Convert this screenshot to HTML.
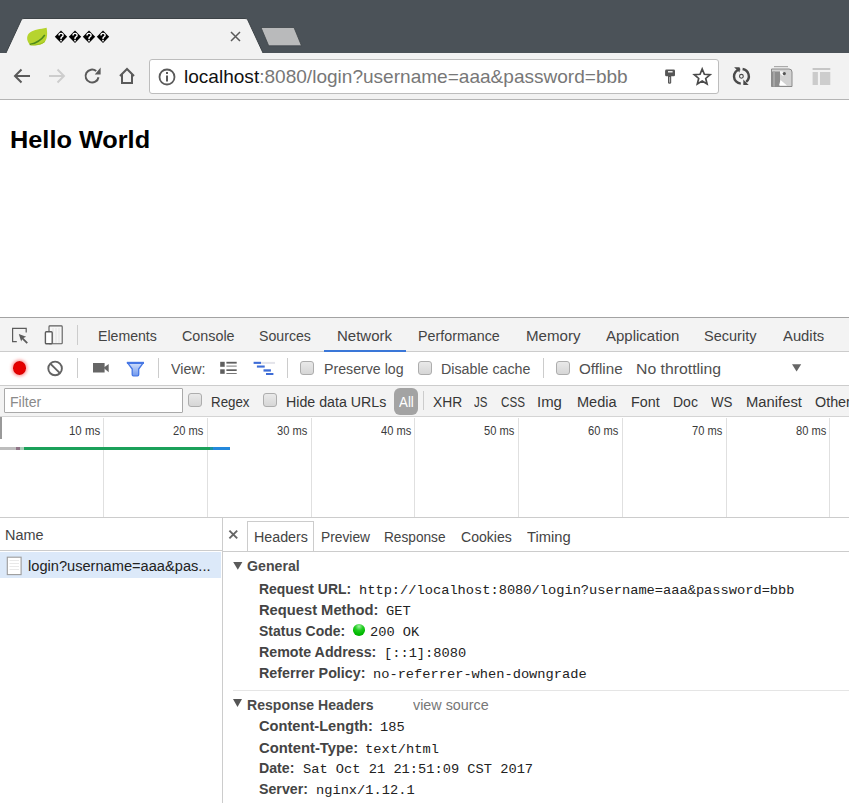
<!DOCTYPE html>
<html><head><meta charset="utf-8">
<style>
*{margin:0;padding:0;box-sizing:border-box}
html,body{width:849px;height:803px;overflow:hidden;background:#fff;font-family:"Liberation Sans",sans-serif;position:relative}
.a{position:absolute}
#strip{left:0;top:0;width:849px;height:54px;background:#4b5258}
#toolbar{left:0;top:53px;width:849px;height:46px;background:#f2f2f2}
#tbline{left:0;top:99px;width:849px;height:1px;background:#b4b4b4}
#omni{left:149px;top:59px;width:570px;height:35px;background:#fff;border:1px solid #bdbdbd;border-radius:3px}
.url{left:183px;top:65px;font-size:19px;color:#7a7a7a;white-space:nowrap}
.url b{font-weight:normal;color:#222}
h1{position:absolute;left:9px;top:124px;font-size:25px;font-weight:bold;color:#111}
#dt{left:0;top:317px;width:849px;height:486px;background:#fff}
.dtline{height:1px;background:#ccc;left:0;width:849px}
.bar{background:#f3f3f3;left:0;width:849px}
.tab{font-size:14.5px;color:#333;white-space:nowrap}
.sep{width:1px;background:#ccc}
.t13{font-size:14px;color:#333;white-space:nowrap}
.cb{width:14px;height:14px;border:1px solid #adadad;border-radius:3px;background:linear-gradient(#e9e9e9,#d6d6d6)}
.ms{font-size:12px;color:#333;text-align:right;white-space:nowrap}
.grid{width:1px;background:#e0e0e0;top:418px;height:99px}
.hk{font-size:14.5px;font-weight:bold;color:#333;white-space:nowrap}
.hv{font-family:"Liberation Mono",monospace;font-size:13.75px;color:#222;white-space:nowrap}
</style></head><body>
<div class="a" id="strip"></div>
<!-- active tab -->
<svg class="a" style="left:0;top:0" width="849" height="54">
 <path d="M5.5 54 L21.5 19.5 Q22.5 18.5 24 18.5 L245 18.5 Q246.5 18.5 247.5 19.5 L263.5 54 Z" fill="#f2f2f2" stroke="#3c4246" stroke-width="1"/>
 <path d="M261 27.5 L294 27.5 L301.5 45.8 L268.7 45.8 Z" fill="#b9babb" stroke="#3e4448" stroke-width="0.8"/>
</svg>
<div class="a" id="toolbar"></div>
<div class="a" id="tbline"></div>
<!-- favicon -->
<svg class="a" style="left:26px;top:26px" width="22" height="22" viewBox="0 0 22 22"><path d="M3.7 18.6C0 14 0.5 9 4 6.5C8 3.5 14 3 20.6 1.7C21.5 7 21.5 12 19 15.5C16 19.5 9 20 3.7 18.6Z" fill="#b6d42e"/><path d="M3.7 18.6C9 17.5 15 14.5 18.8 9" stroke="#4e8a1c" stroke-width="1.5" fill="none"/><path d="M4.5 19C10 19.5 16 18 19 15.5" stroke="#9cc21e" stroke-width="1" fill="none"/></svg>
<svg class="a" style="left:0;top:0" width="120" height="50"><path d="M61 30.5L67.2 36.7L61 42.9L54.8 36.7Z" fill="#000"/><path d="M59 35.4Q59 33.4 61 33.4Q63.1 33.4 63.1 35.3Q63.1 36.5 61.6 37.2Q61 37.6 61 38.9" stroke="#fff" stroke-width="1.4" fill="none"/><rect x="60.2" y="39.8" width="1.6" height="1.6" fill="#fff"/><path d="M75 30.5L81.2 36.7L75 42.9L68.8 36.7Z" fill="#000"/><path d="M73 35.4Q73 33.4 75 33.4Q77.1 33.4 77.1 35.3Q77.1 36.5 75.6 37.2Q75 37.6 75 38.9" stroke="#fff" stroke-width="1.4" fill="none"/><rect x="74.2" y="39.8" width="1.6" height="1.6" fill="#fff"/><path d="M89 30.5L95.2 36.7L89 42.9L82.8 36.7Z" fill="#000"/><path d="M87 35.4Q87 33.4 89 33.4Q91.1 33.4 91.1 35.3Q91.1 36.5 89.6 37.2Q89 37.6 89 38.9" stroke="#fff" stroke-width="1.4" fill="none"/><rect x="88.2" y="39.8" width="1.6" height="1.6" fill="#fff"/><path d="M103 30.5L109.2 36.7L103 42.9L96.8 36.7Z" fill="#000"/><path d="M101 35.4Q101 33.4 103 33.4Q105.1 33.4 105.1 35.3Q105.1 36.5 103.6 37.2Q103 37.6 103 38.9" stroke="#fff" stroke-width="1.4" fill="none"/><rect x="102.2" y="39.8" width="1.6" height="1.6" fill="#fff"/></svg>
<!-- close x -->
<svg class="a" style="left:229.5px;top:31px" width="11" height="11"><path d="M1 1L10 10M10 1L1 10" stroke="#5a5a5a" stroke-width="1.5"/></svg>
<!-- nav icons -->
<svg class="a" style="left:12px;top:66px" width="20" height="20" viewBox="0 0 20 20"><path d="M18 10H3M9.5 3.5L3 10l6.5 6.5" stroke="#5a5a5a" stroke-width="2" fill="none"/></svg>
<svg class="a" style="left:47px;top:66px" width="20" height="20" viewBox="0 0 20 20"><path d="M2 10H17M10.5 3.5L17 10l-6.5 6.5" stroke="#cdcdcd" stroke-width="1.9" fill="none"/></svg>
<svg class="a" style="left:82px;top:66px" width="20" height="20" viewBox="0 0 20 20"><path d="M14.2 5.0A6.5 6.5 0 1 0 16.5 11.2" stroke="#5a5a5a" stroke-width="2" fill="none"/><path d="M18.6 1.6V8.4H12.8Z" fill="#5a5a5a"/></svg>
<svg class="a" style="left:117px;top:66px" width="20" height="20" viewBox="0 0 20 20"><path d="M3 10L10 3L17 10M5 8.5V17H15V8.5" stroke="#5a5a5a" stroke-width="2" fill="none"/></svg>
<div class="a" id="omni"></div>
<svg class="a" style="left:157px;top:67px" width="20" height="20" viewBox="0 0 20 20"><circle cx="10" cy="10" r="7.5" stroke="#5a5a5a" stroke-width="1.8" fill="none"/><rect x="9" y="8.5" width="2" height="6" fill="#5a5a5a"/><rect x="9" y="5" width="2" height="2" fill="#5a5a5a"/></svg>
<!-- key icon -->
<svg class="a" style="left:661px;top:66px" width="18" height="20" viewBox="0 0 18 20"><rect x="4.1" y="3.6" width="9.9" height="6.6" rx="1.3" fill="#555"/><rect x="7" y="5" width="4.6" height="1.5" fill="#e8e8e8"/><path d="M7 10H10.2V16.8Q10.2 17.8 8.6 17.8Q7 17.8 7 16.8Z" fill="#555"/><rect x="8.1" y="11" width="1" height="5.5" fill="#bbb"/></svg>
<svg class="a" style="left:692px;top:66px" width="21" height="21" viewBox="0 0 21 21"><path d="M10.20 3.00L12.37 8.31L18.09 8.74L13.72 12.44L15.08 18.01L10.20 15.00L5.32 18.01L6.68 12.44L2.31 8.74L8.03 8.31Z" stroke="#4a4a4a" stroke-width="1.7" fill="none" stroke-linejoin="miter"/></svg>
<!-- extension icons -->
<svg class="a" style="left:728px;top:62px" width="28" height="28" viewBox="0 0 28 28"><path d="M12.2 7.1A7.3 7.3 0 0 0 12.8 21.6" stroke="#4a4a4a" stroke-width="2.4" fill="none"/><path d="M14.6 7.0A7.3 7.3 0 0 1 18.2 19.8" stroke="#4a4a4a" stroke-width="2.4" fill="none"/><path d="M6.1 5.2H11.6V10.6Z" fill="#4a4a4a"/><path d="M15.3 17.4V23H20.7Z" fill="#4a4a4a"/><circle cx="13.4" cy="14.3" r="1.9" stroke="#4a4a4a" stroke-width="1.1" fill="none"/></svg>
<svg class="a" style="left:766px;top:60px" width="32" height="32" viewBox="0 0 32 32"><rect x="8" y="6" width="14" height="1.2" fill="#aaa"/><path d="M5.5 9H23Q26 9 26 12V26.5H5.5Z" fill="#d2d2d2" stroke="#8a8a8a" stroke-width="1"/><rect x="5.5" y="11.5" width="8.5" height="15" fill="#8d8d8d"/><rect x="7" y="11.5" width="2" height="15" fill="#a5a5a5"/><path d="M14 11Q17 11 19 13Q18 16 17 16Q15 15 14 13Z" fill="#f6f6f6"/><circle cx="18.3" cy="13.6" r="1.6" fill="#555"/><path d="M13 25.5L14.5 20L21 25.5Z" fill="#fff"/></svg>
<svg class="a" style="left:806px;top:62px" width="32" height="28" viewBox="0 0 32 28"><rect x="6.4" y="6" width="18.1" height="1.9" rx="0.9" fill="#c6c6c6"/><rect x="6.6" y="10" width="5.3" height="13" fill="#cbcbcb"/><rect x="14" y="10" width="10.3" height="13" fill="#cdcdcd"/></svg>


<!-- DevTools -->
<div class="a" id="dt"></div>
<div class="a dtline" style="top:317px;background:#a3a3a3"></div>
<div class="a bar" style="top:318px;height:33px"></div>
<div class="a dtline" style="top:351px"></div>
<div class="a" style="left:0;width:849px;top:352px;height:33px;background:#fff"></div>
<div class="a dtline" style="top:385px"></div>
<div class="a bar" style="top:386px;height:30px"></div>
<div class="a dtline" style="top:416px;background:#d4d4d4"></div>

<!-- devtools tab bar -->
<svg class="a" style="left:10px;top:325px" width="20" height="20" viewBox="0 0 20 20"><path d="M6.8 16.6H2.6V3.4H16.2V7.4" stroke="#5c5c5c" stroke-width="1.2" fill="none"/><path d="M8.8 9L16.2 11.8L13.4 13L17.9 17.5L16.6 18.8L12.1 14.3L11.2 16.6Z" fill="#5c5c5c"/></svg>
<svg class="a" style="left:43px;top:324px" width="22" height="22" viewBox="0 0 22 22"><rect x="6" y="1.9" width="13.2" height="17.9" rx="0.8" stroke="#5c5c5c" stroke-width="1.1" fill="#f6f6f6"/><path d="M10 4V19M13 4V19M16 4V19" stroke="#e2e2e2" stroke-width="1"/><rect x="2.4" y="7.7" width="6.8" height="12.1" rx="1" stroke="#5c5c5c" stroke-width="1.4" fill="#fff"/></svg>
<div class="a sep" style="left:77px;top:325px;height:20px"></div>
<div class="a" style="left:324px;top:350px;width:82px;height:2px;background:#3a77d8"></div>

<!-- network toolbar -->
<div class="a" style="left:12.5px;top:361px;width:13.5px;height:13.5px;border-radius:50%;background:radial-gradient(circle,#e60000 50%,#c00000 100%);box-shadow:0 0 3px 1.5px rgba(255,60,60,.45)"></div>
<svg class="a" style="left:46px;top:359px" width="18" height="18" viewBox="0 0 18 18"><circle cx="9.1" cy="9.4" r="6.8" stroke="#636363" stroke-width="1.9" fill="none"/><path d="M4.3 4.6L13.9 14.2" stroke="#636363" stroke-width="1.9"/></svg>
<div class="a sep" style="left:77px;top:358px;height:20px"></div>
<svg class="a" style="left:92px;top:362px" width="18" height="12" viewBox="0 0 18 12"><rect x="1" y="1" width="11.6" height="9.5" fill="#666"/><path d="M11.5 5.7L16.7 2V10.2Z" fill="#666"/></svg>
<svg class="a" style="left:126px;top:361px" width="19" height="16" viewBox="0 0 19 16"><defs><linearGradient id="fg" x1="0" y1="0" x2="0" y2="1"><stop offset="0" stop-color="#d6e3fb"/><stop offset="1" stop-color="#6f98ee"/></linearGradient></defs><path d="M1.4 1.6H17.4L12.7 8V13.6Q12.7 14.8 11.5 14.8H7.4Q6.2 14.8 6.2 13.6V8Z" stroke="#4677e4" stroke-width="1.3" fill="url(#fg)" stroke-linejoin="round"/><rect x="0.9" y="0.8" width="17" height="2.2" fill="#4677e4"/></svg>
<div class="a sep" style="left:158px;top:358px;height:20px"></div>
<svg class="a" style="left:214px;top:354px" width="30" height="26" viewBox="0 0 30 26"><rect x="6.2" y="7.8" width="4.5" height="5" fill="#5e5e5e"/><rect x="12.4" y="7.8" width="10.3" height="1.8" fill="#5e5e5e"/><rect x="12.4" y="11.6" width="10.3" height="1" fill="#777"/><rect x="6.2" y="15.3" width="4.5" height="4.5" fill="#5e5e5e"/><rect x="12.4" y="15.3" width="10.3" height="1.7" fill="#5e5e5e"/><rect x="12.4" y="19" width="10.3" height="1" fill="#777"/></svg>
<svg class="a" style="left:250px;top:358px" width="28" height="20" viewBox="0 0 28 20"><rect x="11" y="3.9" width="14" height="2" fill="#e4e4ea"/><rect x="3.6" y="3.8" width="7.4" height="2.1" fill="#3d6cd6"/><rect x="6.9" y="7.5" width="7.8" height="2.1" fill="#3d6cd6"/><rect x="13.5" y="11.3" width="7.4" height="2.3" fill="#3d6cd6"/><rect x="16" y="15" width="7.4" height="2" fill="#3d6cd6"/></svg>
<div class="a sep" style="left:287px;top:358px;height:20px"></div>
<div class="a cb" style="left:300px;top:361px"></div>
<div class="a cb" style="left:418px;top:361px"></div>
<div class="a sep" style="left:543px;top:358px;height:20px"></div>
<div class="a cb" style="left:556px;top:361px"></div>
<svg class="a" style="left:792px;top:364px" width="10" height="8"><path d="M0 0.2H9.2L4.6 7.6Z" fill="#666"/></svg>

<!-- filter bar -->
<div class="a" style="left:4px;top:388px;width:179px;height:25px;border:1px solid #a9a9a9;background:#fff;border-radius:1px"></div>
<div class="a cb" style="left:188px;top:393px"></div>
<div class="a cb" style="left:263px;top:393px"></div>
<div class="a" style="left:394px;top:388px;width:24px;height:27px;border-radius:6px;background:#a3a3a3"></div>
<div class="a sep" style="left:423px;top:391px;height:19px"></div>

<!-- overview -->
<div class="a grid" style="left:103px"></div>
<div class="a grid" style="left:207px"></div>
<div class="a grid" style="left:311px"></div>
<div class="a grid" style="left:414px"></div>
<div class="a grid" style="left:518px"></div>
<div class="a grid" style="left:622px"></div>
<div class="a grid" style="left:726px"></div>
<div class="a grid" style="left:829px"></div>
<div class="a" style="left:0;top:417px;width:2px;height:22px;background:#999"></div>
<div class="a" style="left:0;top:447px;width:16px;height:3px;background:#bdbdbd"></div>
<div class="a" style="left:16px;top:447px;width:4px;height:3px;background:#8f7486"></div>
<div class="a" style="left:20px;top:447px;width:4px;height:3px;background:#a9ccb8"></div>
<div class="a" style="left:24px;top:447px;width:186px;height:3px;background:#1ba15a"></div>
<div class="a" style="left:210px;top:447px;width:3px;height:3px;background:#1a94a0"></div>
<div class="a" style="left:213px;top:447px;width:16.5px;height:3px;background:#2388dc"></div>
<div class="a dtline" style="top:517px"></div>

<!-- request list -->
<div class="a" style="left:222px;top:518px;width:1px;height:285px;background:#ccc"></div>
<div class="a" style="left:0;top:550px;width:222px;height:1px;background:#ccc"></div>
<div class="a" style="left:0;top:552px;width:221px;height:26px;background:#dce9f9"></div>
<svg class="a" style="left:6px;top:556px" width="17" height="21" viewBox="0 0 17 21"><rect x="1.3" y="1.2" width="13.8" height="17.4" fill="#fff" stroke="#9c9c9c" stroke-width="1.1"/><path d="M3.5 4.5H13M3.5 7.5H13M3.5 10.5H13M3.5 13.5H13" stroke="#e6e6e6" stroke-width="0.9"/></svg>

<!-- details -->
<svg class="a" style="left:228px;top:529px" width="11" height="11"><path d="M1.4 1.6L9.2 9.4M9.2 1.6L1.4 9.4" stroke="#666" stroke-width="1.9"/></svg>
<div class="a" style="left:223px;top:551px;width:626px;height:1px;background:#ccc"></div>
<div class="a" style="left:247px;top:521px;width:67px;height:30px;border:1px solid #ccc;border-bottom:none;background:#fff"></div>

<svg class="a" style="left:233px;top:561px" width="10" height="10"><path d="M0.2 1H9.4L4.8 8.8Z" fill="#5a5a5a"/></svg>
<div class="a" style="left:353px;top:624px;width:12px;height:11.5px;border-radius:50%;background:radial-gradient(circle at 50% 20%,#9ff09f 0,#22cc22 35%,#00b800 70%,#009a00 100%)"></div>
<div class="a" style="left:233px;top:690px;width:616px;height:1px;background:#e5e5e5"></div>
<svg class="a" style="left:233px;top:698px" width="10" height="10"><path d="M0 1H9L4.5 9Z" fill="#555"/></svg>
<div class="a" style="left:183.90px;top:66.85px;font-family:'Liberation Sans',sans-serif;font-size:19px;font-weight:normal;line-height:1;white-space:nowrap;color:#777;transform:scaleX(1.0025);transform-origin:0 0"><span style="color:#111">localhost</span>:8080/login?username=aaa&amp;password=bbb</div>
<div class="a" style="left:9.67px;top:127.80px;font-family:'Liberation Sans',sans-serif;font-size:24.5px;font-weight:bold;line-height:1;white-space:nowrap;color:#000;transform:scaleX(1.0328);transform-origin:0 0">Hello World</div>
<div class="a" style="left:98.30px;top:327.90px;font-family:'Liberation Sans',sans-serif;font-size:15.5px;font-weight:normal;line-height:1;white-space:nowrap;color:#444;transform:scaleX(0.9109);transform-origin:0 0">Elements</div>
<div class="a" style="left:182.40px;top:327.90px;font-family:'Liberation Sans',sans-serif;font-size:15.5px;font-weight:normal;line-height:1;white-space:nowrap;color:#444;transform:scaleX(0.9246);transform-origin:0 0">Console</div>
<div class="a" style="left:259.19px;top:327.90px;font-family:'Liberation Sans',sans-serif;font-size:15.5px;font-weight:normal;line-height:1;white-space:nowrap;color:#444;transform:scaleX(0.9125);transform-origin:0 0">Sources</div>
<div class="a" style="left:336.60px;top:327.90px;font-family:'Liberation Sans',sans-serif;font-size:15.5px;font-weight:normal;line-height:1;white-space:nowrap;color:#444;transform:scaleX(0.9667);transform-origin:0 0">Network</div>
<div class="a" style="left:418.10px;top:327.90px;font-family:'Liberation Sans',sans-serif;font-size:15.5px;font-weight:normal;line-height:1;white-space:nowrap;color:#444;transform:scaleX(0.9216);transform-origin:0 0">Performance</div>
<div class="a" style="left:525.50px;top:327.90px;font-family:'Liberation Sans',sans-serif;font-size:15.5px;font-weight:normal;line-height:1;white-space:nowrap;color:#444;transform:scaleX(0.9732);transform-origin:0 0">Memory</div>
<div class="a" style="left:605.60px;top:327.90px;font-family:'Liberation Sans',sans-serif;font-size:15.5px;font-weight:normal;line-height:1;white-space:nowrap;color:#444;transform:scaleX(0.9671);transform-origin:0 0">Application</div>
<div class="a" style="left:704.16px;top:327.90px;font-family:'Liberation Sans',sans-serif;font-size:15.5px;font-weight:normal;line-height:1;white-space:nowrap;color:#444;transform:scaleX(0.9364);transform-origin:0 0">Security</div>
<div class="a" style="left:783.00px;top:327.90px;font-family:'Liberation Sans',sans-serif;font-size:15.5px;font-weight:normal;line-height:1;white-space:nowrap;color:#444;transform:scaleX(0.9558);transform-origin:0 0">Audits</div>
<div class="a" style="left:171.00px;top:360.70px;font-family:'Liberation Sans',sans-serif;font-size:15.5px;font-weight:normal;line-height:1;white-space:nowrap;color:#505050;transform:scaleX(0.9189);transform-origin:0 0">View:</div>
<div class="a" style="left:323.50px;top:360.70px;font-family:'Liberation Sans',sans-serif;font-size:15.5px;font-weight:normal;line-height:1;white-space:nowrap;color:#505050;transform:scaleX(0.9149);transform-origin:0 0">Preserve log</div>
<div class="a" style="left:441.00px;top:360.70px;font-family:'Liberation Sans',sans-serif;font-size:15.5px;font-weight:normal;line-height:1;white-space:nowrap;color:#505050;transform:scaleX(0.9186);transform-origin:0 0">Disable cache</div>
<div class="a" style="left:578.60px;top:360.70px;font-family:'Liberation Sans',sans-serif;font-size:15.5px;font-weight:normal;line-height:1;white-space:nowrap;color:#505050;transform:scaleX(0.9795);transform-origin:0 0">Offline</div>
<div class="a" style="left:635.50px;top:360.70px;font-family:'Liberation Sans',sans-serif;font-size:15.5px;font-weight:normal;line-height:1;white-space:nowrap;color:#505050;transform:scaleX(1.0181);transform-origin:0 0">No throttling</div>
<div class="a" style="left:9.60px;top:394.00px;font-family:'Liberation Sans',sans-serif;font-size:15.5px;font-weight:normal;line-height:1;white-space:nowrap;color:#8a8a8a;transform:scaleX(0.9086);transform-origin:0 0">Filter</div>
<div class="a" style="left:211.00px;top:394.00px;font-family:'Liberation Sans',sans-serif;font-size:15.5px;font-weight:normal;line-height:1;white-space:nowrap;color:#363636;transform:scaleX(0.8600);transform-origin:0 0">Regex</div>
<div class="a" style="left:286.10px;top:394.00px;font-family:'Liberation Sans',sans-serif;font-size:15.5px;font-weight:normal;line-height:1;white-space:nowrap;color:#363636;transform:scaleX(0.9174);transform-origin:0 0">Hide data URLs</div>
<div class="a" style="left:433.10px;top:394.00px;font-family:'Liberation Sans',sans-serif;font-size:15.5px;font-weight:normal;line-height:1;white-space:nowrap;color:#363636;transform:scaleX(0.8906);transform-origin:0 0">XHR</div>
<div class="a" style="left:473.80px;top:394.00px;font-family:'Liberation Sans',sans-serif;font-size:15.5px;font-weight:normal;line-height:1;white-space:nowrap;color:#363636;transform:scaleX(0.7444);transform-origin:0 0">JS</div>
<div class="a" style="left:501.00px;top:394.00px;font-family:'Liberation Sans',sans-serif;font-size:15.5px;font-weight:normal;line-height:1;white-space:nowrap;color:#363636;transform:scaleX(0.7500);transform-origin:0 0">CSS</div>
<div class="a" style="left:537.44px;top:394.00px;font-family:'Liberation Sans',sans-serif;font-size:15.5px;font-weight:normal;line-height:1;white-space:nowrap;color:#363636;transform:scaleX(0.9640);transform-origin:0 0">Img</div>
<div class="a" style="left:577.10px;top:394.00px;font-family:'Liberation Sans',sans-serif;font-size:15.5px;font-weight:normal;line-height:1;white-space:nowrap;color:#363636;transform:scaleX(0.9381);transform-origin:0 0">Media</div>
<div class="a" style="left:630.60px;top:394.00px;font-family:'Liberation Sans',sans-serif;font-size:15.5px;font-weight:normal;line-height:1;white-space:nowrap;color:#363636;transform:scaleX(0.9226);transform-origin:0 0">Font</div>
<div class="a" style="left:673.20px;top:394.00px;font-family:'Liberation Sans',sans-serif;font-size:15.5px;font-weight:normal;line-height:1;white-space:nowrap;color:#363636;transform:scaleX(0.9036);transform-origin:0 0">Doc</div>
<div class="a" style="left:711.10px;top:394.00px;font-family:'Liberation Sans',sans-serif;font-size:15.5px;font-weight:normal;line-height:1;white-space:nowrap;color:#363636;transform:scaleX(0.8600);transform-origin:0 0">WS</div>
<div class="a" style="left:745.90px;top:394.00px;font-family:'Liberation Sans',sans-serif;font-size:15.5px;font-weight:normal;line-height:1;white-space:nowrap;color:#363636;transform:scaleX(0.9542);transform-origin:0 0">Manifest</div>
<div class="a" style="left:815.00px;top:394.00px;font-family:'Liberation Sans',sans-serif;font-size:15.5px;font-weight:normal;line-height:1;white-space:nowrap;color:#363636;transform:scaleX(0.9248);transform-origin:0 0">Other</div>
<div class="a" style="left:399.10px;top:394.00px;font-family:'Liberation Sans',sans-serif;font-size:15.5px;font-weight:normal;line-height:1;white-space:nowrap;color:#fff;transform:scaleX(0.8588);transform-origin:0 0">All</div>
<div class="a" style="left:68.62px;top:424.00px;font-family:'Liberation Sans',sans-serif;font-size:13px;font-weight:normal;line-height:1;white-space:nowrap;color:#3a3a3a;transform:scaleX(0.8800);transform-origin:0 0">10 ms</div>
<div class="a" style="left:173.22px;top:424.00px;font-family:'Liberation Sans',sans-serif;font-size:13px;font-weight:normal;line-height:1;white-space:nowrap;color:#3a3a3a;transform:scaleX(0.8556);transform-origin:0 0">20 ms</div>
<div class="a" style="left:276.94px;top:424.00px;font-family:'Liberation Sans',sans-serif;font-size:13px;font-weight:normal;line-height:1;white-space:nowrap;color:#3a3a3a;transform:scaleX(0.8556);transform-origin:0 0">30 ms</div>
<div class="a" style="left:380.66px;top:424.00px;font-family:'Liberation Sans',sans-serif;font-size:13px;font-weight:normal;line-height:1;white-space:nowrap;color:#3a3a3a;transform:scaleX(0.8556);transform-origin:0 0">40 ms</div>
<div class="a" style="left:484.38px;top:424.00px;font-family:'Liberation Sans',sans-serif;font-size:13px;font-weight:normal;line-height:1;white-space:nowrap;color:#3a3a3a;transform:scaleX(0.8556);transform-origin:0 0">50 ms</div>
<div class="a" style="left:588.10px;top:424.00px;font-family:'Liberation Sans',sans-serif;font-size:13px;font-weight:normal;line-height:1;white-space:nowrap;color:#3a3a3a;transform:scaleX(0.8556);transform-origin:0 0">60 ms</div>
<div class="a" style="left:691.82px;top:424.00px;font-family:'Liberation Sans',sans-serif;font-size:13px;font-weight:normal;line-height:1;white-space:nowrap;color:#3a3a3a;transform:scaleX(0.8556);transform-origin:0 0">70 ms</div>
<div class="a" style="left:795.54px;top:424.00px;font-family:'Liberation Sans',sans-serif;font-size:13px;font-weight:normal;line-height:1;white-space:nowrap;color:#3a3a3a;transform:scaleX(0.8556);transform-origin:0 0">80 ms</div>
<div class="a" style="left:4.90px;top:526.80px;font-family:'Liberation Sans',sans-serif;font-size:15.5px;font-weight:normal;line-height:1;white-space:nowrap;color:#444;transform:scaleX(0.9317);transform-origin:0 0">Name</div>
<div class="a" style="left:28.30px;top:557.60px;font-family:'Liberation Sans',sans-serif;font-size:15.5px;font-weight:normal;line-height:1;white-space:nowrap;color:#222;transform:scaleX(0.9435);transform-origin:0 0">login?username=aaa&amp;pas...</div>
<div class="a" style="left:253.50px;top:528.70px;font-family:'Liberation Sans',sans-serif;font-size:15.5px;font-weight:normal;line-height:1;white-space:nowrap;color:#444;transform:scaleX(0.9207);transform-origin:0 0">Headers</div>
<div class="a" style="left:320.70px;top:528.70px;font-family:'Liberation Sans',sans-serif;font-size:15.5px;font-weight:normal;line-height:1;white-space:nowrap;color:#444;transform:scaleX(0.8893);transform-origin:0 0">Preview</div>
<div class="a" style="left:384.30px;top:528.70px;font-family:'Liberation Sans',sans-serif;font-size:15.5px;font-weight:normal;line-height:1;white-space:nowrap;color:#444;transform:scaleX(0.8814);transform-origin:0 0">Response</div>
<div class="a" style="left:461.20px;top:528.70px;font-family:'Liberation Sans',sans-serif;font-size:15.5px;font-weight:normal;line-height:1;white-space:nowrap;color:#444;transform:scaleX(0.9071);transform-origin:0 0">Cookies</div>
<div class="a" style="left:526.50px;top:528.70px;font-family:'Liberation Sans',sans-serif;font-size:15.5px;font-weight:normal;line-height:1;white-space:nowrap;color:#444;transform:scaleX(0.9500);transform-origin:0 0">Timing</div>
<div class="a" style="left:247.20px;top:559.00px;font-family:'Liberation Sans',sans-serif;font-size:14.5px;font-weight:bold;line-height:1;white-space:nowrap;color:#4a4a4a;transform:scaleX(0.9778);transform-origin:0 0">General</div>
<div class="a" style="left:258.50px;top:581.80px;font-family:'Liberation Sans',sans-serif;font-size:14.5px;font-weight:bold;line-height:1;white-space:nowrap;color:#444;transform:scaleX(0.9611);transform-origin:0 0">Request URL:</div>
<div class="a" style="left:258.50px;top:603.00px;font-family:'Liberation Sans',sans-serif;font-size:14.5px;font-weight:bold;line-height:1;white-space:nowrap;color:#444;transform:scaleX(1.0145);transform-origin:0 0">Request Method:</div>
<div class="a" style="left:258.50px;top:624.00px;font-family:'Liberation Sans',sans-serif;font-size:14.5px;font-weight:bold;line-height:1;white-space:nowrap;color:#444;transform:scaleX(0.9629);transform-origin:0 0">Status Code:</div>
<div class="a" style="left:258.50px;top:645.00px;font-family:'Liberation Sans',sans-serif;font-size:14.5px;font-weight:bold;line-height:1;white-space:nowrap;color:#444;transform:scaleX(0.9815);transform-origin:0 0">Remote Address:</div>
<div class="a" style="left:258.50px;top:665.80px;font-family:'Liberation Sans',sans-serif;font-size:14.5px;font-weight:bold;line-height:1;white-space:nowrap;color:#444;transform:scaleX(0.9860);transform-origin:0 0">Referrer Policy:</div>
<div class="a" style="left:247.40px;top:697.70px;font-family:'Liberation Sans',sans-serif;font-size:14.5px;font-weight:bold;line-height:1;white-space:nowrap;color:#4a4a4a;transform:scaleX(0.9695);transform-origin:0 0">Response Headers</div>
<div class="a" style="left:413.00px;top:696.70px;font-family:'Liberation Sans',sans-serif;font-size:15.5px;font-weight:normal;line-height:1;white-space:nowrap;color:#777;transform:scaleX(0.9256);transform-origin:0 0">view source</div>
<div class="a" style="left:258.50px;top:719.30px;font-family:'Liberation Sans',sans-serif;font-size:14.5px;font-weight:bold;line-height:1;white-space:nowrap;color:#444;transform:scaleX(1.0098);transform-origin:0 0">Content-Length:</div>
<div class="a" style="left:258.50px;top:740.60px;font-family:'Liberation Sans',sans-serif;font-size:14.5px;font-weight:bold;line-height:1;white-space:nowrap;color:#444;transform:scaleX(1.0208);transform-origin:0 0">Content-Type:</div>
<div class="a" style="left:258.50px;top:761.40px;font-family:'Liberation Sans',sans-serif;font-size:14.5px;font-weight:bold;line-height:1;white-space:nowrap;color:#444;transform:scaleX(0.9778);transform-origin:0 0">Date:</div>
<div class="a" style="left:258.50px;top:782.10px;font-family:'Liberation Sans',sans-serif;font-size:14.5px;font-weight:bold;line-height:1;white-space:nowrap;color:#444;transform:scaleX(0.9796);transform-origin:0 0">Server:</div>
<div class="a" style="left:359.40px;top:583.80px;font-family:'Liberation Mono',monospace;font-size:13px;font-weight:normal;line-height:1;white-space:nowrap;color:#222;transform:scaleX(1.0533);transform-origin:0 0">http://localhost:8080/login?username=aaa&amp;password=bbb</div>
<div class="a" style="left:386.10px;top:605.00px;font-family:'Liberation Mono',monospace;font-size:13px;font-weight:normal;line-height:1;white-space:nowrap;color:#222;transform:scaleX(1.0533);transform-origin:0 0">GET</div>
<div class="a" style="left:369.55px;top:626.00px;font-family:'Liberation Mono',monospace;font-size:13px;font-weight:normal;line-height:1;white-space:nowrap;color:#222;transform:scaleX(1.0533);transform-origin:0 0">200 OK</div>
<div class="a" style="left:383.89px;top:647.00px;font-family:'Liberation Mono',monospace;font-size:13px;font-weight:normal;line-height:1;white-space:nowrap;color:#222;transform:scaleX(1.0533);transform-origin:0 0">[::1]:8080</div>
<div class="a" style="left:373.40px;top:667.80px;font-family:'Liberation Mono',monospace;font-size:13px;font-weight:normal;line-height:1;white-space:nowrap;color:#222;transform:scaleX(1.0533);transform-origin:0 0">no-referrer-when-downgrade</div>
<div class="a" style="left:379.95px;top:721.30px;font-family:'Liberation Mono',monospace;font-size:13px;font-weight:normal;line-height:1;white-space:nowrap;color:#222;transform:scaleX(1.0533);transform-origin:0 0">185</div>
<div class="a" style="left:364.85px;top:742.60px;font-family:'Liberation Mono',monospace;font-size:13px;font-weight:normal;line-height:1;white-space:nowrap;color:#222;transform:scaleX(1.0533);transform-origin:0 0">text/html</div>
<div class="a" style="left:302.80px;top:763.40px;font-family:'Liberation Mono',monospace;font-size:13px;font-weight:normal;line-height:1;white-space:nowrap;color:#222;transform:scaleX(1.0533);transform-origin:0 0">Sat Oct 21 21:51:09 CST 2017</div>
<div class="a" style="left:315.60px;top:784.10px;font-family:'Liberation Mono',monospace;font-size:13px;font-weight:normal;line-height:1;white-space:nowrap;color:#222;transform:scaleX(1.0533);transform-origin:0 0">nginx/1.12.1</div>
</body></html>
